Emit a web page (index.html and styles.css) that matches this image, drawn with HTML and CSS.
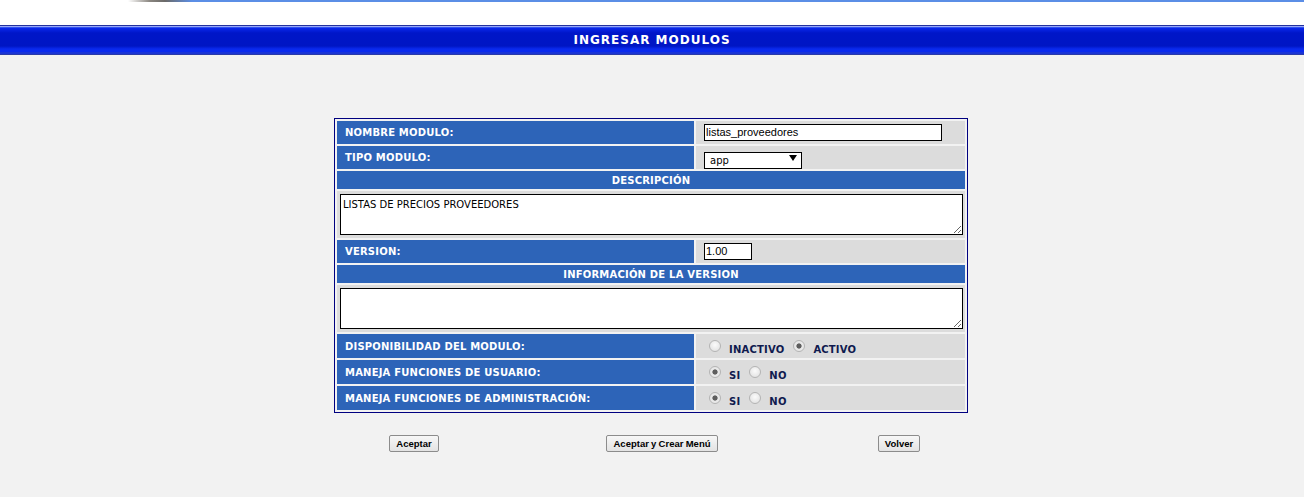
FILE: index.html
```html
<!DOCTYPE html>
<html lang="es">
<head>
<meta charset="utf-8">
<title>Ingresar Modulos</title>
<link rel="stylesheet" href="styles.css">
</head>
<body>
<div class="topbar"><div class="topline"></div></div>
<h1 class="title">INGRESAR MODULOS</h1>
<main class="page">
  <form class="form">
    <div class="grid">
      <div class="label">NOMBRE MODULO:</div>
      <div class="value"><input class="text w-name" type="text" value="listas_proveedores"></div>

      <div class="label">TIPO MODULO:</div>
      <div class="value">
        <span class="select-wrap"><select class="select"><option>app</option></select></span>
      </div>

      <div class="section">DESCRIPCIÓN</div>
      <div class="area-cell"><textarea class="area">LISTAS DE PRECIOS PROVEEDORES</textarea></div>

      <div class="label">VERSION:</div>
      <div class="value"><input class="text w-ver" type="text" value="1.00"></div>

      <div class="section">INFORMACIÓN DE LA VERSION</div>
      <div class="area-cell"><textarea class="area"></textarea></div>

      <div class="label">DISPONIBILIDAD DEL MODULO:</div>
      <div class="value radios">
        <input class="radio" type="radio" name="disp"><span class="opt">INACTIVO</span>
        <input class="radio" type="radio" name="disp" checked><span class="opt">ACTIVO</span>
      </div>

      <div class="label">MANEJA FUNCIONES DE USUARIO:</div>
      <div class="value radios">
        <input class="radio" type="radio" name="usr" checked><span class="opt">SI</span>
        <input class="radio" type="radio" name="usr"><span class="opt">NO</span>
      </div>

      <div class="label">MANEJA FUNCIONES DE ADMINISTRACIÓN:</div>
      <div class="value radios">
        <input class="radio" type="radio" name="adm" checked><span class="opt">SI</span>
        <input class="radio" type="radio" name="adm"><span class="opt">NO</span>
      </div>
    </div>

    <div class="buttons">
      <button type="button" class="btn">Aceptar</button>
      <button type="button" class="btn">Aceptar y Crear Menú</button>
      <button type="button" class="btn">Volver</button>
    </div>
  </form>
</main>
</body>
</html>
```

FILE: styles.css
```css
html, body {
  margin: 0;
  padding: 0;
}

body {
  background: #f2f2f2;
  font-family: "DejaVu Sans", Verdana, sans-serif;
  min-height: 497px;
}

.topbar {
  height: 25px;
  background: #ffffff;
}

.topline {
  height: 2px;
  background: linear-gradient(to right, #ffffff 0, #ffffff 128px, #8a8680 150px, #6b6a68 165px, #5b8ee6 192px, #5b8ee6 100%);
}

.title {
  margin: 0;
  height: 30px;
  display: flex;
  align-items: center;
  justify-content: center;
  color: #ffffff;
  font-family: "DejaVu Sans", Verdana, sans-serif;
  font-weight: 700;
  font-size: 12px;
  letter-spacing: 1px;
  background: linear-gradient(to bottom,
    #22309e 0px, #22309e 1px,
    #98a8f8 1px, #98a8f8 2px,
    #3050f0 2px, #3050f0 3px,
    #0a28ec 3px, #0016c8 8px,
    #0016c4 21px, #0a2aee 24px,
    #0a2aee 27px, #1a34d6 27px,
    #1a34d6 29px, #2a3aaa 29px, #2a3aaa 30px);
}

.page {
  padding-top: 63px;
}

.form {
  width: 634px;
  margin-left: calc(50% - 318px);
}

.grid {
  display: grid;
  grid-template-columns: 357px 269px;
  grid-template-rows: 23px 23px 18px 47px 23px 18px 47px 24px 24px 24px;
  gap: 2px;
  padding: 2px;
  border: 1px solid #000080;
  background: #f2f2f2;
}

.label {
  display: flex;
  align-items: center;
  padding-left: 8px;
  background: #2d64b8;
  color: #ffffff;
  font-weight: 700;
  font-size: 10px;
  letter-spacing: 0.2px;
  white-space: nowrap;
}

.section {
  grid-column: 1 / -1;
  display: flex;
  align-items: center;
  justify-content: center;
  background: #2d64b8;
  color: #ffffff;
  font-weight: 700;
  font-size: 10px;
  letter-spacing: 0.2px;
}

.value {
  display: flex;
  align-items: center;
  padding-left: 8px;
  background: #dcdcdc;
}

.area-cell {
  grid-column: 1 / -1;
  padding: 3px 2px 3px 3px;
  background: #dcdcdc;
}

.area {
  display: block;
  box-sizing: border-box;
  width: 100%;
  height: 100%;
  margin: 0;
  padding: 4px 2px;
  border: 1px solid #000000;
  border-radius: 0;
  background: #ffffff;
  color: #000000;
  font-family: "DejaVu Sans", Verdana, sans-serif;
  font-size: 10px;
  line-height: 12px;
  outline: none;
}

.text {
  box-sizing: border-box;
  height: 17px;
  margin: 0;
  padding: 0 1px 1px;
  border: 1px solid #000000;
  border-radius: 0;
  background: #ffffff;
  color: #000000;
  font-family: "Liberation Sans", Arial, sans-serif;
  font-size: 11px;
  line-height: 14px;
  outline: none;
}

.w-name { width: 238px; }
.w-ver { width: 48px; }

.select-wrap {
  position: relative;
  display: inline-block;
  width: 98px;
  height: 17px;
}

.select-wrap::after {
  content: "";
  position: absolute;
  right: 5px;
  top: 6px;
  width: 0;
  height: 0;
  border-left: 4px solid transparent;
  border-right: 4px solid transparent;
  border-top: 6px solid #000000;
  pointer-events: none;
}

.select {
  appearance: none;
  -webkit-appearance: none;
  box-sizing: border-box;
  width: 98px;
  height: 17px;
  margin: 0;
  padding: 0 0 0 5px;
  border: 1px solid #000000;
  border-radius: 0;
  background: #ffffff;
  color: #000000;
  font-family: "DejaVu Sans", Verdana, sans-serif;
  font-size: 10px;
  outline: none;
}

.radios {
  padding-left: 13px;
}

.radio {
  appearance: none;
  -webkit-appearance: none;
  box-sizing: border-box;
  width: 12px;
  height: 12px;
  margin: 0 8px 0 0;
  border: 1px solid #b4b4b4;
  border-radius: 50%;
  background: radial-gradient(circle at 50% 40%, #fbfbfb 0, #e6e6e6 70%);
  flex: none;
}

.radio:checked {
  background: radial-gradient(circle, #5e5e5e 0, #5e5e5e 2.2px, #e9e9e9 3px, #e6e6e6 100%);
}

.opt {
  padding-top: 8px;
  margin-right: 9px;
  color: #0f1a4e;
  font-weight: 700;
  font-size: 10px;
  line-height: 12px;
  letter-spacing: 0.2px;
}

.buttons {
  display: grid;
  grid-template-columns: 160px 336px 138px;
  justify-items: center;
  margin-top: 22px;
}

.btn {
  box-sizing: border-box;
  height: 17px;
  margin: 0;
  padding: 0 6px;
  border: 1px solid #8c8c8c;
  border-radius: 2px;
  background: linear-gradient(#f7f7f7, #e3e3e3);
  color: #000000;
  font-family: "Liberation Sans", Arial, sans-serif;
  font-weight: 700;
  font-size: 9.5px;
  word-spacing: -0.4px;
  line-height: 15px;
  cursor: pointer;
}
```
